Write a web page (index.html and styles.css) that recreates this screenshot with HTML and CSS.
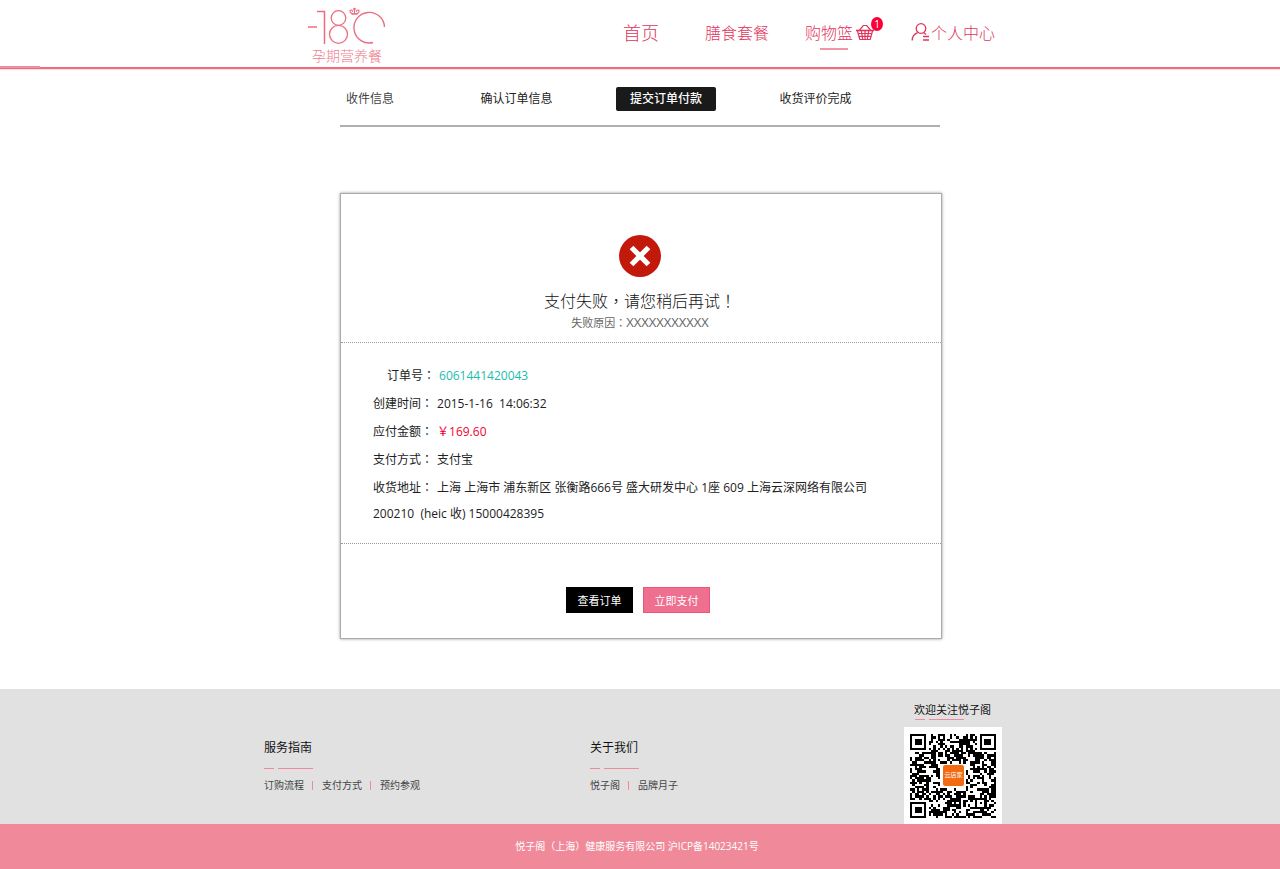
FILE: index.html
```html
<!DOCTYPE html>
<html lang="zh-CN">
<head>
<meta charset="utf-8">
<meta name="viewport" content="width=device-width, initial-scale=1">
<title>提交订单付款</title>
<link rel="stylesheet" href="styles.css">
</head>
<body>
<header class="header">
  <div class="wrap header-inner">
    <a class="logo" href="#">
      <svg class="logo-mark" viewBox="0 0 78 38" aria-label="-18℃" role="img">
        <g fill="none" stroke="#ec6d80">
          <path d="M0 20H9" stroke-width="1.500"/>
          <path d="M9 4.500H16.500V37" stroke-width="1.500"/>
          <circle cx="30.500" cy="11" r="7.300" stroke-width="1.300"/>
          <circle cx="30.500" cy="27.300" r="9" stroke-width="1.300"/>
          <path d="M76.500 20A15.300 15.300 0 1 0 65 35.500" stroke-width="1.400"/>
          <path d="M43.500 7.300h6M46.500 7V1.500M46.500 6.800c-3 .2-5-1-4.500-3.500 1.500-.8 2.700 0 2.700 1.500M46.500 6.800c3 .2 5-1 4.500-3.500-1.500-.8-2.700 0-2.700 1.500" stroke-width="1.100"/>
        </g>
        <circle cx="46.500" cy="2" r="1.300" fill="#ec6d80"/>
      </svg>
      <span class="logo-text">孕期营养餐</span>
    </a>
    <nav class="nav">
      <a class="nav-home" href="#">首页</a>
      <a href="#">膳食套餐</a>
      <a class="nav-current" href="#"><span>购物篮</span>
        <svg class="basket" viewBox="0 0 20 18" aria-hidden="true">
          <g fill="none" stroke="#e0355c">
            <path d="M1 7.500h18" stroke-width="1.600"/>
            <path d="M4.500 7L8.300 2.500h3.400L15.500 7" stroke-width="1.200"/>
            <path d="M2.500 8l2.300 8.500h10.400L17.500 8M3 10.500h14M4 13.300h12M6.300 8l1.500 8.500M10 8v8.500M13.700 8l-1.500 8.500" stroke-width="1.200"/>
          </g>
        </svg>
        <b class="badge">1</b>
      </a>
      <a href="#">
        <svg class="user" viewBox="0 0 20 20" aria-hidden="true">
          <g fill="none" stroke="#e0355c" stroke-width="1.300">
            <circle cx="10" cy="6.500" r="4.800"/>
            <path d="M1.200 18.500c0-4 2-6.500 5.500-7.800M12.500 10.500l2.500 2M12 14.500h6M12 18h6"/>
          </g>
        </svg><span>个人中心</span>
      </a>
    </nav>
  </div>
</header>

<main class="main">
  <ol class="steps">
    <li>收件信息</li>
    <li>确认订单信息</li>
    <li><strong class="step-active" aria-current="step">提交订单付款</strong></li>
    <li>收货评价完成</li>
  </ol>

  <section class="card">
    <div class="status">
      <svg class="status-icon" viewBox="0 0 42 42" aria-hidden="true">
        <circle cx="21" cy="21" r="21" fill="#c3190b"/>
        <path d="M12.500 12.500l17 17M29.500 12.500l-17 17" stroke="#fff" stroke-width="5.200"/>
      </svg>
      <h1>支付失败<span class="punct" lang="zh-Hant">，</span>请您稍后再试<span class="punct" lang="zh-Hant">！</span></h1>
      <p>失败原因<span class="punct" lang="zh-Hant">：</span><span class="reason">XXXXXXXXXXX</span></p>
    </div>
    <dl class="details">
      <div><dt class="indent">订单号<span class="punct" lang="zh-Hant">：</span></dt><dd class="order-no">6061441420043</dd></div>
      <div><dt>创建时间<span class="punct" lang="zh-Hant">：</span></dt><dd>2015-1-16&nbsp; 14:06:32</dd></div>
      <div><dt>应付金额<span class="punct" lang="zh-Hant">：</span></dt><dd class="price">￥169.60</dd></div>
      <div><dt>支付方式<span class="punct" lang="zh-Hant">：</span></dt><dd>支付宝</dd></div>
      <div><dt>收货地址<span class="punct" lang="zh-Hant">：</span></dt><dd>上海 上海市 浦东新区 张衡路666号 盛大研发中心 1座 609 上海云深网络有限公司<br>200210&nbsp; (heic 收) 15000428395</dd></div>
    </dl>
    <div class="actions">
      <button class="btn btn-dark" type="button">查看订单</button>
      <button class="btn btn-pink" type="button">立即支付</button>
    </div>
  </section>
</main>

<footer>
  <div class="footer">
    <div class="wrap footer-inner">
      <section class="links">
        <h2>服务指南</h2>
        <div class="rule"></div>
        <ul><li><a href="#">订购流程</a></li><li><a href="#">支付方式</a></li><li><a href="#">预约参观</a></li></ul>
      </section>
      <section class="links">
        <h2>关于我们</h2>
        <div class="rule"></div>
        <ul><li><a href="#">悦子阁</a></li><li><a href="#">品牌月子</a></li></ul>
      </section>
      <section class="follow">
        <h2>欢迎关注悦子阁</h2>
        <div class="rule"></div>
        <div class="qr">
          <svg viewBox="0 0 37 37" preserveAspectRatio="none" role="img" aria-label="二维码" shape-rendering="crispEdges">
            <path id="qr-modules" fill="#000"/>
          </svg>
          <span class="qr-logo">云店家</span>
        </div>
      </section>
    </div>
  </div>
  <p class="copyright">悦子阁<span class="punct" lang="zh-Hant">（</span>上海<span class="punct" lang="zh-Hant">）</span>健康服务有限公司 沪ICP备14023421号</p>
</footer>
<script src="script.js"></script>
</body>
</html>
```
FILE: styles.css
```css
* { box-sizing: border-box; }
body {
  margin: 0;
  font-family: "Open Sans", "Noto Sans CJK SC", sans-serif;
  font-size: 12px;
  color: #222;
  background: #fff;
}
h1, h2, p, dl, dd, ul, ol { margin: 0; padding: 0; font-weight: 400; }
ul, ol { list-style: none; }
a { color: inherit; text-decoration: none; }
svg { display: block; }
.wrap { width: 100%; max-width: 760px; margin: 0 auto; }
/* Punctuation centred in its full-width cell */
.punct { font-family: "Noto Sans CJK TC", sans-serif; line-height: 1; }

.header { position: relative; border-bottom: 2px solid #ec6d80; box-shadow: 0 1px 1px #fbdfe3; }
.header::before {
  content: "";
  position: absolute;
  left: 0;
  bottom: -1px;
  width: 40px;
  height: 2px;
  background: #f08c9b;
}
.header-inner {
  display: flex;
  justify-content: space-between;
  height: 67px;
  padding: 7px 25px 0 48px;
}
.logo { width: 78px; color: #ee7d8e; }
.logo-mark { width: 78px; height: 38px; }
.logo-text { display: block; text-align: center; font-size: 14px; line-height: 22px; font-weight: 300; white-space: nowrap; }
.nav {
  display: flex;
  gap: 36px;
  font-size: 16px;
  font-weight: 300;
  line-height: 24px;
  color: #e0355c;
  padding-top: 14px;
}
.nav a { position: relative; display: flex; height: 24px; white-space: nowrap; }
.nav .nav-home { font-size: 18px; margin-right: 10px; }
.basket { width: 20px; height: 18px; margin: 2px 0 0 2px; }
.nav-current::after {
  content: "";
  position: absolute;
  left: 15px;
  top: 27px;
  width: 28px;
  height: 2px;
  background: #f096a6;
}
.badge {
  position: absolute;
  right: -8px;
  top: -4px;
  width: 12px;
  height: 14px;
  border-radius: 50%;
  background: #fa0038;
  color: #fff;
  font-size: 10px;
  font-weight: 400;
  line-height: 14px;
  text-align: center;
}
.user { width: 20px; height: 20px; margin-top: 1px; }

.main { width: 100%; max-width: 600px; margin: 0 auto; padding-bottom: 50px; }
.steps {
  display: grid;
  grid-template-columns: 2fr 3fr 3fr 3fr 1fr;
  padding: 18px 0 14px 2px;
  border-bottom: 2px solid #b0b0b0;
  line-height: 24px;
  text-align: center;
}
.steps li:first-child { padding-left: 4px; text-align: left; color: #444; }
.step-active {
  display: inline-block;
  width: 100px;
  border-radius: 2px;
  background: #1a1a1a;
  color: #fff;
  font-weight: 500;
}

.card {
  margin: 66px -2px 0 0;
  border: 1px solid #a8acac;
  box-shadow: 0 0 3px #999;
}
.status { padding: 41px 2px 9px 0; text-align: center; border-bottom: 1px dotted #999; }
.status-icon { width: 42px; height: 42px; margin: 0 auto 12px; }
.status h1 { font-size: 16px; line-height: 24px; font-weight: 300; color: #111; }
.status p { font-size: 11px; line-height: 20px; color: #666; }
.reason { font-size: 13px; line-height: 1; }
.details { padding: 20px 32px 14px; line-height: 26px; border-bottom: 1px dotted #999; }
.details div { margin-bottom: 2px; }
.details dt { display: inline; }
.details .indent { padding-left: 14px; }
.details dd { display: inline; margin-left: 4px; }
.details .order-no { color: #1cbcae; }
.details .price { color: #f5002f; }
.actions { display: flex; justify-content: center; gap: 10px; padding: 43px 6px 25px 0; }
.btn {
  width: 67px;
  height: 26px;
  padding: 0;
  border: 1px solid #000;
  background: #000;
  color: #fff;
  font: inherit;
  font-size: 11px;
}
.btn-pink { border-color: #e9567b; background: #ee6f90; }

.footer { background: #e1e1e1; }
.footer-inner {
  display: grid;
  grid-template-columns: 326px 314px 98px;
  padding-left: 4px;
  height: 135px;
}
.links { padding-top: 49px; color: #444; font-size: 10px; }
.links h2 { font-size: 12px; line-height: 20px; color: #111; }
.links ul { display: flex; line-height: 16px; margin-top: 8px; white-space: nowrap; }
.links li + li { display: flex; align-items: center; }
.links li + li::before { content: ""; width: 1px; height: 9px; margin: 0 9px 0 8px; background: #f08a9a; }
.rule { display: flex; gap: 4px; margin-top: 10px; }
.rule::before, .rule::after { content: ""; height: 1px; width: 10px; background: #f08a9a; }
.rule::after { width: 35px; }
.follow { padding-top: 13px; }
.follow h2 { font-size: 11px; line-height: 16px; color: #111; padding-left: 10px; white-space: nowrap; }
.follow .rule { margin: 1px 0 7px 11px; }
.qr { position: relative; padding: 7px 6px; background: #fff; height: 97px; }
.qr svg { width: 86px; height: 84px; }
.qr-logo {
  position: absolute;
  left: 38px;
  top: 37px;
  width: 23px;
  height: 23px;
  border: 1px solid #fff;
  border-radius: 3px;
  background: #f26a12;
  color: #fff;
  font-size: 6px;
  line-height: 20px;
  text-align: center;
  white-space: nowrap;
}
.copyright { background: #f08a9a; color: #fff; font-size: 10px; line-height: 45px; text-align: center; padding-right: 6px; }
```
FILE: script.js
```js
// Fills the QR symbol: three finder squares, an alignment square, timing lines and data modules.
(function () {
  var size = 37, path = "", seed = 20150116;

  function ring(x, y, cx, cy) {
    return Math.max(Math.abs(x - cx), Math.abs(y - cy));
  }

  function dark(x, y) {
    seed = (seed * 1103515245 + 12345) % 2147483648;
    var finders = [[3, 3], [33, 3], [3, 33]];
    for (var i = 0; i < finders.length; i++) {
      var r = ring(x, y, finders[i][0], finders[i][1]);
      if (r <= 4) return r === 3 || r <= 1;
    }
    var a = ring(x, y, 30, 30);
    if (a <= 2) return a !== 1;
    if (ring(x, y, 18, 18) <= 5) return false;
    if (x === 6 || y === 6) return (x + y) % 2 === 0;
    return seed / 2147483648 < 0.53;
  }

  for (var y = 0; y < size; y++) {
    for (var x = 0; x < size; x++) {
      if (dark(x, y)) path += "M" + x + " " + y + "h1v1h-1z";
    }
  }
  document.getElementById("qr-modules").setAttribute("d", path);
})();
```
